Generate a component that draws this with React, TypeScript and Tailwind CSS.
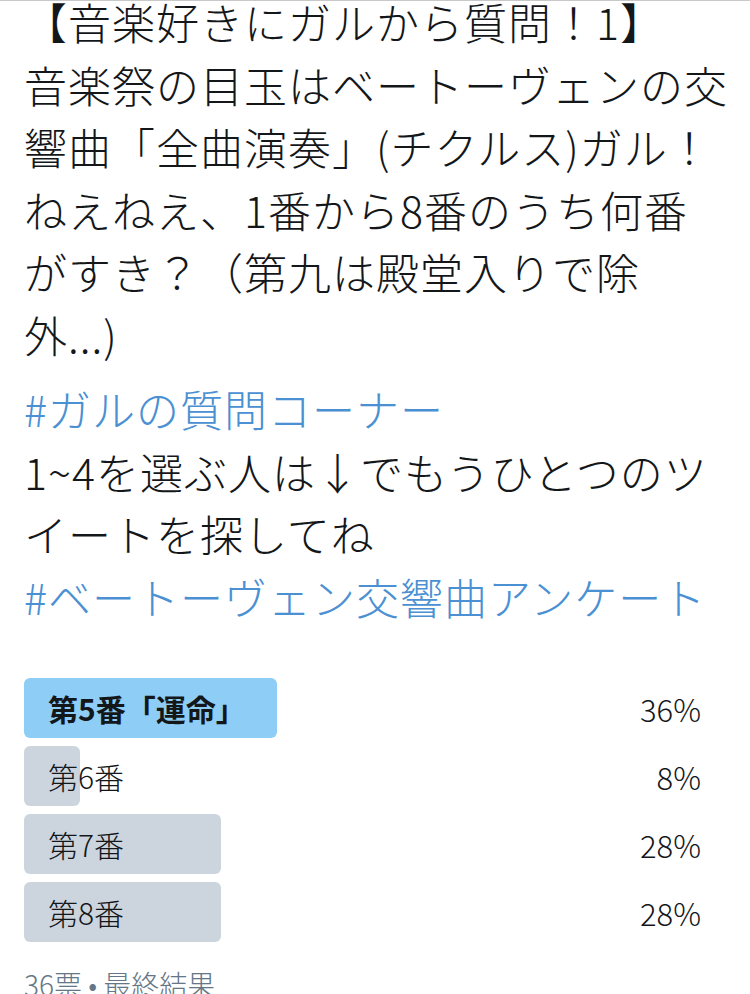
import React from 'react'

const firstParagraph = [
  '【音楽好きにガルから質問！1】',
  '音楽祭の目玉はベートーヴェンの交',
  '響曲「全曲演奏」(チクルス)ガル！',
  'ねえねえ、1番から8番のうち何番',
  'がすき？（第九は殿堂入りで除',
  '外...)',
]

const options = [
  { label: '第5番「運命」', pct: 36, winner: true },
  { label: '第6番', pct: 8, winner: false },
  { label: '第7番', pct: 28, winner: false },
  { label: '第8番', pct: 28, winner: false },
]

const BAR_MAX = 703

function PollRow({ label, pct, winner }: { label: string; pct: number; winner: boolean }) {
  return (
    <div className="grid h-[60px] w-[703px]">
      <div
        className={`col-start-1 row-start-1 h-full rounded-[6px] ${winner ? 'bg-[#8ecef6]' : 'bg-[#ccd5dd]'}`}
        style={{ width: `${(pct / 100) * BAR_MAX}px` }}
      />
      <div className="col-start-1 row-start-1 flex items-center justify-between pl-[24px] pr-[26px]">
        <span className={`text-[30px] leading-none ${winner ? 'font-bold' : 'font-light'}`}>{label}</span>
        <span className="text-[31px] leading-none font-light">{pct}%</span>
      </div>
    </div>
  )
}

export default function App() {
  return (
    <div
      className="w-[750px] h-[994px] overflow-hidden bg-white border-t border-[#c8c8c8] text-[#14171a]"
      style={{ fontFamily: '"Noto Sans CJK JP", "Noto Sans", sans-serif' }}
    >
      <div className="-mt-[11px] px-[24px] text-[43px] tracking-[1px] leading-[62.5px] font-light whitespace-nowrap">
        <div>
          {firstParagraph.map((line) => (
            <div key={line}>{line}</div>
          ))}
        </div>
        <div className="mt-[12px]">
          <div className="text-[#4a90d2]">#ガルの質問コーナー</div>
          <div>1~4を選ぶ人は↓でもうひとつのツ</div>
          <div>イートを探してね</div>
          <div className="text-[#4a90d2]">#ベートーヴェン交響曲アンケート</div>
        </div>
      </div>

      <div className="mt-[51px] px-[24px] flex flex-col gap-[8px]">
        {options.map((o) => (
          <PollRow key={o.label} {...o} />
        ))}
      </div>

      <div className="mt-[24px] px-[24px] text-[28px] leading-[36px] font-light text-[#657786]">
        36票 • 最終結果
      </div>
    </div>
  )
}
